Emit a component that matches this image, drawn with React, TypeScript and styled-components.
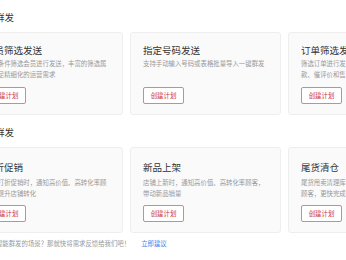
import React from "react";
import styled, { createGlobalStyle } from "styled-components";

const Global = createGlobalStyle`
  html, body { margin: 0; padding: 0; background: #ffffff; overflow: hidden; }
  body { font-family: "Noto Sans CJK SC", "Noto Sans", sans-serif; }
`;

const Page = styled.div`
  width: 520px;
  margin-left: -36px;
  padding-top: 10px;
  display: flex;
  flex-direction: column;
`;

const Section = styled.section`
  display: flex;
  flex-direction: column;
  & + & { margin-top: 10px; }
`;

const Heading = styled.h2`
  margin: 0 0 8px 0;
  padding-left: 12px;
  font-size: 9.5px;
  line-height: 14px;
  font-weight: 400;
  color: #333;
`;

const Row = styled.div`
  display: grid;
  grid-template-columns: repeat(3, 151px);
  gap: 7px;
  margin-left: 8px;
`;

const Card = styled.div<{ $tall?: boolean }>`
  box-sizing: border-box;
  height: ${(p) => (p.$tall ? 86 : 83)}px;
  padding: ${(p) => (p.$tall ? 12 : 10)}px 12px 10px;
  border: 1px solid #eeeeee;
  border-radius: 3px;
  background: #fafafa;
  display: flex;
  flex-direction: column;
  overflow: hidden;
`;

const Title = styled.div`
  font-size: 9.5px;
  line-height: 14px;
  color: #333;
  white-space: nowrap;
`;

const Desc = styled.div<{ $tall?: boolean }>`
  margin-top: ${(p) => (p.$tall ? 3 : 1)}px;
  height: 22px;
  font-size: 6.4px;
  line-height: 11px;
  color: #999;
  white-space: nowrap;
`;

const Button = styled.button<{ $tall?: boolean }>`
  margin-top: ${(p) => (p.$tall ? 6 : 7)}px;
  align-self: flex-start;
  box-sizing: border-box;
  width: 41px;
  height: 17px;
  padding: 0;
  border: 1px solid #d6868c;
  border-radius: 2px;
  background: #ffffff;
  color: #c8323e;
  font-family: inherit;
  font-size: 6.4px;
  line-height: 15px;
  cursor: pointer;
`;

const Footer = styled.div`
  margin-top: 5px;
  font-size: 6.4px;
  line-height: 11px;
  color: #999;
  white-space: nowrap;
`;

const Link = styled.a`
  margin-left: 11px;
  color: #3b7cf0;
  text-decoration: none;
`;

type Item = { title: string; lines: string[] };

const groups: { name: string; tall: boolean; items: Item[] }[] = [
  {
    name: "精准群发",
    tall: false,
    items: [
      { title: "会员筛选发送", lines: ["根据条件筛选会员进行发送，丰富的筛选属", "性满足精细化的运营需求"] },
      { title: "指定号码发送", lines: ["支持手动输入号码或表格批量导入一键群发"] },
      { title: "订单筛选发送", lines: ["筛选订单进行发送，可实现催付、提醒付", "款、催评价和售后关怀"] },
    ],
  },
  {
    name: "营销群发",
    tall: true,
    items: [
      { title: "打折促销", lines: ["店铺打折促销时，通知高价值、高转化率顾", "客，提升店铺转化"] },
      { title: "新品上架", lines: ["店铺上新时，通知高价值、高转化率顾客，", "带动新品销量"] },
      { title: "尾货清仓", lines: ["尾货甩卖清理库存，通知高价值、高转化率", "顾客，更快完成清仓"] },
    ],
  },
];

export default function App() {
  return (
    <>
      <Global />
      <Page>
        {groups.map((g) => (
          <Section key={g.name}>
            <Heading>{g.name}</Heading>
            <Row>
              {g.items.map((it) => (
                <Card key={it.title} $tall={g.tall}>
                  <Title>{it.title}</Title>
                  <Desc $tall={g.tall}>
                    {it.lines.map((l, i) => (
                      <React.Fragment key={i}>
                        {i > 0 && <br />}
                        {l}
                      </React.Fragment>
                    ))}
                  </Desc>
                  <Button $tall={g.tall}>创建计划</Button>
                </Card>
              ))}
            </Row>
          </Section>
        ))}
        <Footer>
          还有其他希望能群发的场景？那就快将需求反馈给我们吧！
          <Link href="#">立即建议</Link>
        </Footer>
      </Page>
    </>
  );
}
